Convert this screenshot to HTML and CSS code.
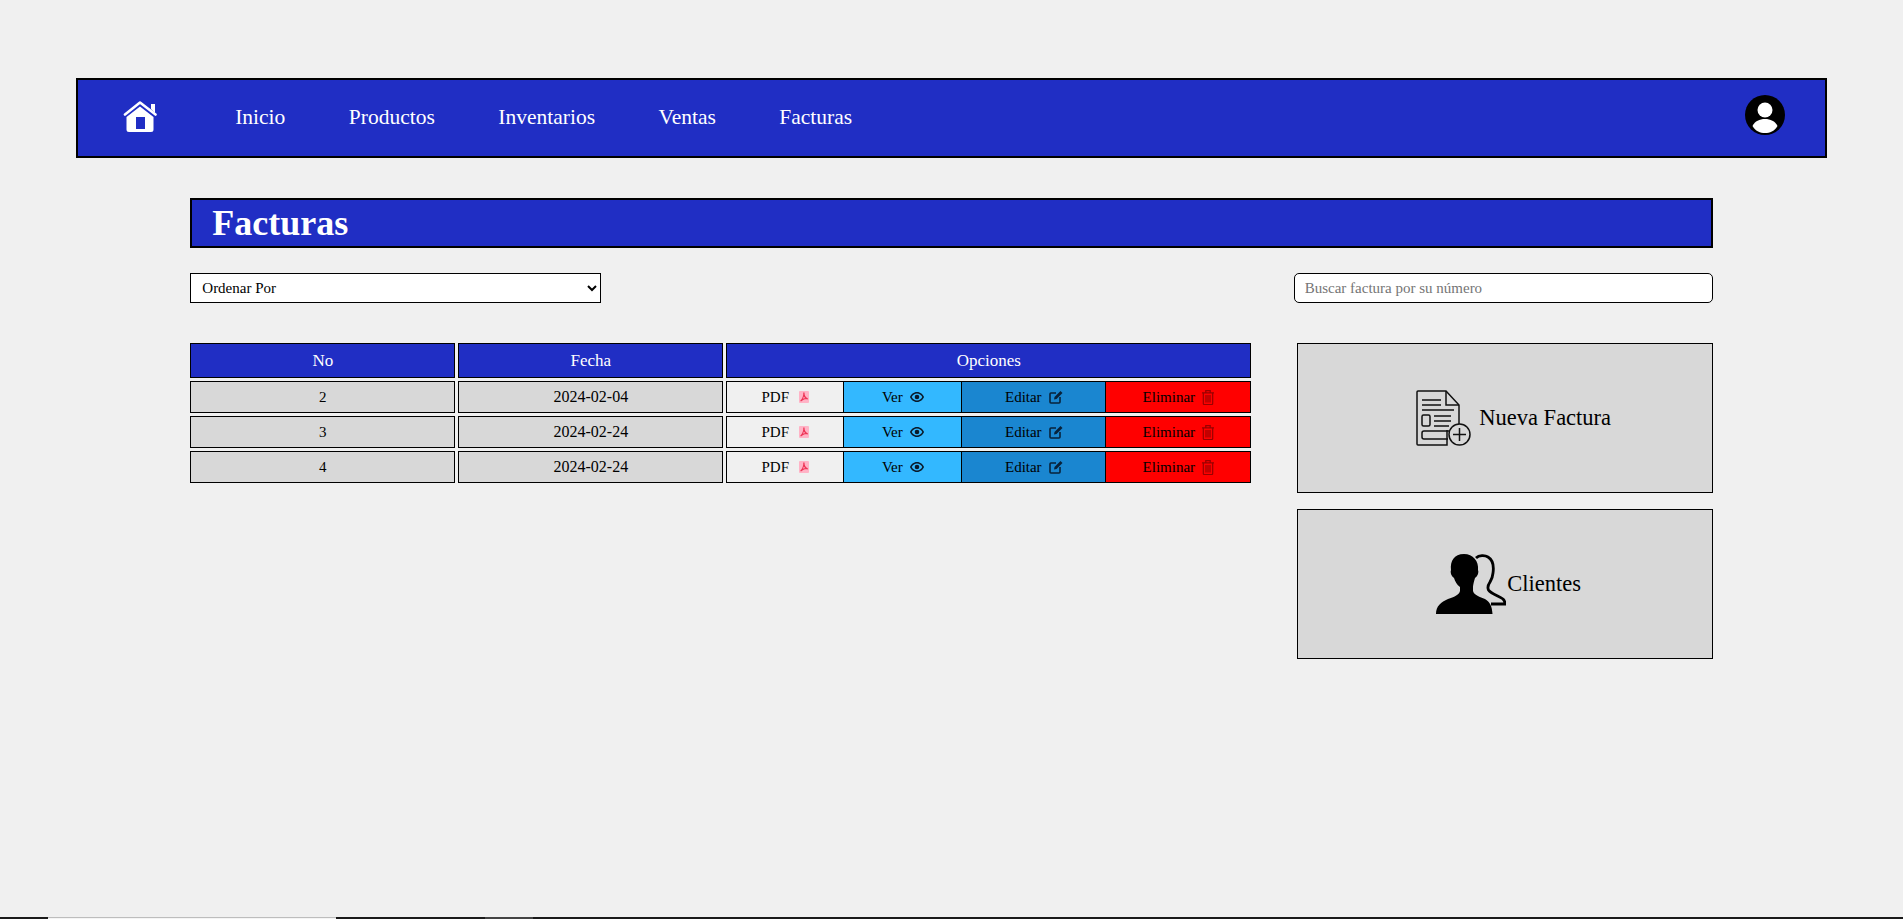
FILE: index.html
```html
<!DOCTYPE html>
<html lang="es">
<head>
    <meta charset="UTF-8">
    <meta name="viewport" content="width=device-width, initial-scale=1.0">
    <title>Facturas</title>
    <link rel="stylesheet" href="styles.css">
</head>
<body>

    <!-- Iconos reutilizados en la tabla -->
    <svg class="simbolos" width="0" height="0">
        <symbol id="i-pdf" viewBox="0 0 10 12">
            <rect width="10" height="12" rx="1" fill="#ffb3c6"/>
            <path d="M4.300 1.500 H5.500 C5.500 4 6 6 8.800 7.300 V8.500 C6.500 8 4.500 8.300 2 10.500 L1.200 9.700 C3.500 7.500 4.500 4.500 4.300 1.500 Z" fill="#ee3355"/>
            <path d="M4.900 5.500 C4.500 6.500 4.200 7 3.700 7.800 C4.700 7.300 5.500 7.200 6.500 7.200 C5.800 6.800 5.300 6.200 4.900 5.500 Z" fill="#ffb3c6"/>
        </symbol>
        <symbol id="i-ver" viewBox="0 0 14 10">
            <path fill-rule="evenodd" fill="#0a1a2a" d="M7 0 C10.500 0 13 2.500 14 5 C13 7.500 10.500 10 7 10 C3.500 10 1 7.500 0 5 C1 2.500 3.500 0 7 0 Z M7 1.500 C4.800 1.500 2.800 3 1.700 5 C2.800 7 4.800 8.500 7 8.500 C9.200 8.500 11.200 7 12.300 5 C11.200 3 9.200 1.500 7 1.500 Z"/>
            <circle cx="7" cy="5" r="2.300" fill="#0a1a2a"/>
        </symbol>
        <symbol id="i-editar" viewBox="0 0 14 14">
            <path d="M7 3 H2 Q1 3 1 4 V12 Q1 13 2 13 H10 Q11 13 11 12 V7" fill="none" stroke="#08223a" stroke-width="1.600"/>
            <path d="M5 9.500 L5.500 7 L11.500 1 L13.500 3 L7.500 9 Z" fill="#08223a"/>
        </symbol>
        <symbol id="i-eliminar" viewBox="0 0 12 15">
            <path d="M0 2.800 H12 M3.800 2.800 V0.700 H8.200 V2.800" fill="none" stroke="#990000" stroke-width="1.300"/>
            <path d="M1.300 2.800 V13.500 Q1.300 14.500 2.300 14.500 H9.700 Q10.700 14.500 10.700 13.500 V2.800 M4 5 V12.500 M6 5 V12.500 M8 5 V12.500" fill="none" stroke="#990000" stroke-width="1.200"/>
        </symbol>
    </svg>

    <!-- Barra de navegacion -->
    <nav class="navbar">
        <a class="nav-home" href="#">
            <svg width="34" height="32" viewBox="0 0 34 32">
                <path d="M2 14.500 L17 2.500 L32.500 14.500" fill="none" stroke="#fff" stroke-width="2.600" stroke-linecap="round" stroke-linejoin="round"/>
                <path d="M28 9 V4 H32 V13 Z" fill="#fff"/>
                <path fill-rule="evenodd" fill="#fff" d="M17 6.500 L30.500 17 V29.500 Q30.500 32 28 32 H6 Q3.500 32 3.500 29.500 V17 Z M13 17 V29 H22 V17 Z"/>
            </svg>
        </a>
        <ul class="nav-links">
            <li><a href="#">Inicio</a></li>
            <li><a href="#">Productos</a></li>
            <li><a href="#">Inventarios</a></li>
            <li><a href="#">Ventas</a></li>
            <li><a href="#">Facturas</a></li>
        </ul>
        <a class="nav-user" href="#">
            <svg width="40" height="40" viewBox="0 0 40 40">
                <circle cx="20" cy="20" r="20" fill="#000"/>
                <circle cx="20" cy="15" r="7.500" fill="#fff"/>
                <path d="M7.500 31 C10 26 14.500 24 20 24 C25.500 24 30 26 32.500 31 C29 36.500 25 38 20 38 C15 38 11 36.500 7.500 31 Z" fill="#fff"/>
            </svg>
        </a>
    </nav>

    <main class="contenido">
        <h1 class="titulo">Facturas</h1>

        <div class="filtros">
            <select class="ordenar">
                <option>Ordenar Por</option>
                <option>Fecha</option>
                <option>Numero</option>
            </select>
            <input class="buscar" type="text" placeholder="Buscar factura por su número">
        </div>

        <div class="cuerpo">
            <table class="tabla">
                <thead>
                    <tr>
                        <th class="col-no">No</th>
                        <th class="col-fecha">Fecha</th>
                        <th class="col-opciones">Opciones</th>
                    </tr>
                </thead>
                <tbody>
                    <tr>
                        <td>2</td>
                        <td class="fecha">2024-02-04</td>
                        <td class="opciones">
                            <div class="botones">
                                <a class="btn btn-pdf" href="#">PDF <svg class="ico-pdf" viewBox="0 0 10 12"><use href="#i-pdf"/></svg></a>
                                <a class="btn btn-ver" href="#">Ver <svg class="ico-ver" viewBox="0 0 14 10"><use href="#i-ver"/></svg></a>
                                <a class="btn btn-editar" href="#">Editar <svg class="ico-editar" viewBox="0 0 14 14"><use href="#i-editar"/></svg></a>
                                <a class="btn btn-eliminar" href="#">Eliminar <svg class="ico-eliminar" viewBox="0 0 12 15"><use href="#i-eliminar"/></svg></a>
                            </div>
                        </td>
                    </tr>
                    <tr>
                        <td>3</td>
                        <td class="fecha">2024-02-24</td>
                        <td class="opciones">
                            <div class="botones">
                                <a class="btn btn-pdf" href="#">PDF <svg class="ico-pdf" viewBox="0 0 10 12"><use href="#i-pdf"/></svg></a>
                                <a class="btn btn-ver" href="#">Ver <svg class="ico-ver" viewBox="0 0 14 10"><use href="#i-ver"/></svg></a>
                                <a class="btn btn-editar" href="#">Editar <svg class="ico-editar" viewBox="0 0 14 14"><use href="#i-editar"/></svg></a>
                                <a class="btn btn-eliminar" href="#">Eliminar <svg class="ico-eliminar" viewBox="0 0 12 15"><use href="#i-eliminar"/></svg></a>
                            </div>
                        </td>
                    </tr>
                    <tr>
                        <td>4</td>
                        <td class="fecha">2024-02-24</td>
                        <td class="opciones">
                            <div class="botones">
                                <a class="btn btn-pdf" href="#">PDF <svg class="ico-pdf" viewBox="0 0 10 12"><use href="#i-pdf"/></svg></a>
                                <a class="btn btn-ver" href="#">Ver <svg class="ico-ver" viewBox="0 0 14 10"><use href="#i-ver"/></svg></a>
                                <a class="btn btn-editar" href="#">Editar <svg class="ico-editar" viewBox="0 0 14 14"><use href="#i-editar"/></svg></a>
                                <a class="btn btn-eliminar" href="#">Eliminar <svg class="ico-eliminar" viewBox="0 0 12 15"><use href="#i-eliminar"/></svg></a>
                            </div>
                        </td>
                    </tr>
                </tbody>
            </table>

            <aside class="accesos">
                <a class="acceso" href="#">
                    <svg class="ico-nueva" width="73" height="56" viewBox="-18 0 73 56" fill="none" stroke="#111" stroke-width="1.500">
                        <path d="M31 40 V55 H2 Q1 55 1 54 V2 Q1 1 2 1 H30 L43 15 V34"/>
                        <path d="M30 1 V15 H43"/>
                        <path d="M6 10 H25 M6 15 H25 M6 20 H38 M18 26 H35 M18 31 H35 M18 36 H33"/>
                        <rect x="6" y="25" width="8" height="11" rx="1.500"/>
                        <path d="M33 41 H8 Q6 41 6 43 V47 Q6 49 8 49 H32"/>
                        <circle cx="43.500" cy="44.500" r="10.500" fill="#d8d8d8"/>
                        <path d="M43.500 38 V51 M37 44.500 H50"/>
                    </svg>
                    <span>Nueva Factura</span>
                </a>
                <a class="acceso" href="#">
                    <svg class="ico-clientes" width="78" height="62" viewBox="-8 0 78 62">
                        <path d="M40 5 C43 2 49 2 52 4 C57 7 58 13 57 20 C56.500 25 55 27 54 29 C52 32 51 34 52.500 37 C55 41 63 43 67 46 C68.500 47.500 69 49 69 51 L55 51" fill="none" stroke="#000" stroke-width="2.800"/>
                        <path d="M0 61 C0 53 5 49 12 46 C18 44 23 42 24 38 L24 34 C21 32 19 28 18 25 C15 23 14 19 15 17 C14 8 18 1 28 1 C37 1 43 8 42 17 C43 19 42 23 39 25 C38 28 37 32 37 34 L37 38 C38 42 44 44 49 46 C54 49 56 53 56.500 61 Z" fill="#000"/>
                    </svg>
                    <span>Clientes</span>
                </a>
            </aside>
        </div>
    </main>

    <!-- Franja inferior -->
    <div class="franja">
        <span class="franja-a"></span>
        <span class="franja-b"></span>
        <span class="franja-c"></span>
        <span class="franja-d"></span>
        <span class="franja-c"></span>
    </div>

</body>
</html>
```

FILE: styles.css
```css
* {
    box-sizing: border-box;
}
body {
    margin: 0;
    height: 919px;
    overflow: hidden;
    display: flex;
    flex-direction: column;
    background-color: #f0f0f0;
    font-family: "Liberation Serif", serif;
    color: #000;
}
a {
    color: inherit;
    text-decoration: none;
}
.simbolos {
    position: absolute;
}

/* Navbar */
.navbar {
    width: 92%;
    height: 80px;
    margin: 78px auto 0;
    padding: 0 40px 0 45px;
    display: flex;
    align-items: center;
    background-color: #202ec4;
    border: 2px solid #000;
}
.nav-home {
    display: flex;
    margin-bottom: 4px;
}
.nav-links {
    display: flex;
    gap: 63.500px;
    margin: 0 0 2px 78px;
    padding: 0;
    list-style: none;
    font-size: 21.500px;
    color: #fff;
}
.nav-user {
    display: flex;
    margin-left: auto;
    margin-bottom: 6px;
}

/* Contenido */
.contenido {
    width: 80%;
    margin: 0 auto;
}
.titulo {
    height: 50px;
    margin: 40px 0 0;
    padding-left: 20px;
    background-color: #202ec4;
    border: 2px solid #000;
    color: #fff;
    font-size: 36px;
    line-height: 46px;
}
.filtros {
    display: flex;
    justify-content: space-between;
    margin-top: 25px;
}
.ordenar {
    width: 411px;
    height: 30px;
    padding: 0 7px;
    background-color: #fff;
    border: 1px solid #000;
    font-family: inherit;
    font-size: 15px;
}
.buscar {
    width: 419px;
    height: 30px;
    padding: 0 10px;
    background-color: #fff;
    border: 1px solid #000;
    border-radius: 5px;
    font-family: inherit;
    font-size: 15px;
}
.cuerpo {
    display: flex;
    justify-content: space-between;
    margin-top: 37px;
    margin-left: -3px;
}

/* Tabla */
.tabla {
    width: 1067px;
    table-layout: fixed;
    align-self: flex-start;
    border-collapse: separate;
    border-spacing: 3px;
    text-align: center;
    font-size: 15px;
}
.col-no,
.col-fecha {
    width: 265px;
}
.tabla th,
.tabla td {
    padding: 0;
    border: 1px solid #000;
}
.tabla th {
    height: 35px;
    background-color: #202ec4;
    color: #fff;
    font-size: 17px;
    font-weight: normal;
}
.tabla td {
    height: 32px;
    background-color: #d8d8d8;
}
.tabla td.fecha {
    font-size: 16px;
}
.tabla td.opciones {
    background-color: #f0f0f0;
}
.botones {
    display: flex;
    height: 30px;
}
.btn {
    display: flex;
    align-items: center;
    justify-content: center;
    gap: 7px;
}
.btn-pdf {
    width: 116px;
    gap: 10px;
}
.btn-ver {
    width: 118px;
    background-color: #33b8ff;
    border-left: 1px solid #000;
}
.btn-editar {
    width: 144px;
    background-color: #1a86d0;
    border-left: 1px solid #000;
}
.btn-eliminar {
    flex: 1;
    background-color: #ff0000;
    border-left: 1px solid #000;
}
.ico-pdf {
    width: 10px;
    height: 12px;
}
.ico-ver {
    width: 14px;
    height: 10px;
}
.ico-editar {
    width: 14px;
    height: 14px;
}
.ico-eliminar {
    width: 12px;
    height: 15px;
}

/* Accesos laterales */
.accesos {
    display: flex;
    flex-direction: column;
    gap: 16px;
    width: 416px;
    margin-top: 3px;
}
.acceso {
    display: flex;
    align-items: center;
    justify-content: center;
    height: 150px;
    background-color: #d8d8d8;
    border: 1px solid #000;
    font-size: 22.500px;
}
.ico-nueva {
    margin-right: 8px;
}
.ico-clientes {
    margin-right: 1px;
}

/* Franja inferior */
.franja {
    display: flex;
    height: 2px;
    margin-top: auto;
    background-color: #1a1a1a;
}
.franja-a {
    width: 48px;
}
.franja-b {
    width: 288px;
    background-color: #f4f4f4;
    border-top: 1px solid #bdbdbd;
}
.franja-c {
    width: 149px;
}
.franja-d {
    width: 48px;
    background-color: #444;
}
```
